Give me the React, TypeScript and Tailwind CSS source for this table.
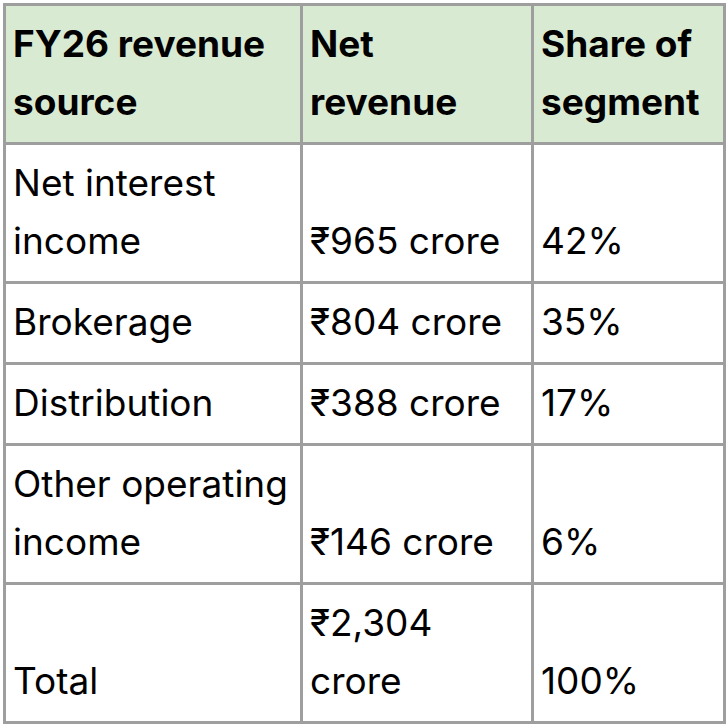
const rows: [string, string, string][] = [
  ["Net interest income", "₹965 crore", "42%"],
  ["Brokerage", "₹804 crore", "35%"],
  ["Distribution", "₹388 crore", "17%"],
  ["Other operating income", "₹146 crore", "6%"],
  ["Total", "₹2,304 crore", "100%"],
];

const cell = "border-[3px] border-[#9e9e9e] pl-[7px] pr-[6px] pt-[9px] pb-[11px] align-bottom text-left";

export default function App() {
  return (
    <div className="min-h-screen bg-white p-[3px]" style={{ fontFamily: "Inter, 'Noto Sans', 'DejaVu Sans', sans-serif" }}>
      <table className="w-[720px] table-fixed border-collapse text-[37px] leading-[58px] text-black">
        <colgroup>
          <col className="w-[297px]" />
          <col className="w-[231px]" />
          <col className="w-[192px]" />
        </colgroup>
        <thead>
          <tr className="bg-[#d9ead3]">
            <th className={cell + " font-bold"}>FY26 revenue source</th>
            <th className={cell + " font-bold"}>Net revenue</th>
            <th className={cell + " font-bold"}>Share of segment</th>
          </tr>
        </thead>
        <tbody>
          {rows.map((r) => (
            <tr key={r[0]}>
              <td className={cell}>{r[0]}</td>
              <td className={cell}>{r[1]}</td>
              <td className={cell}>{r[2]}</td>
            </tr>
          ))}
        </tbody>
      </table>
    </div>
  );
}
